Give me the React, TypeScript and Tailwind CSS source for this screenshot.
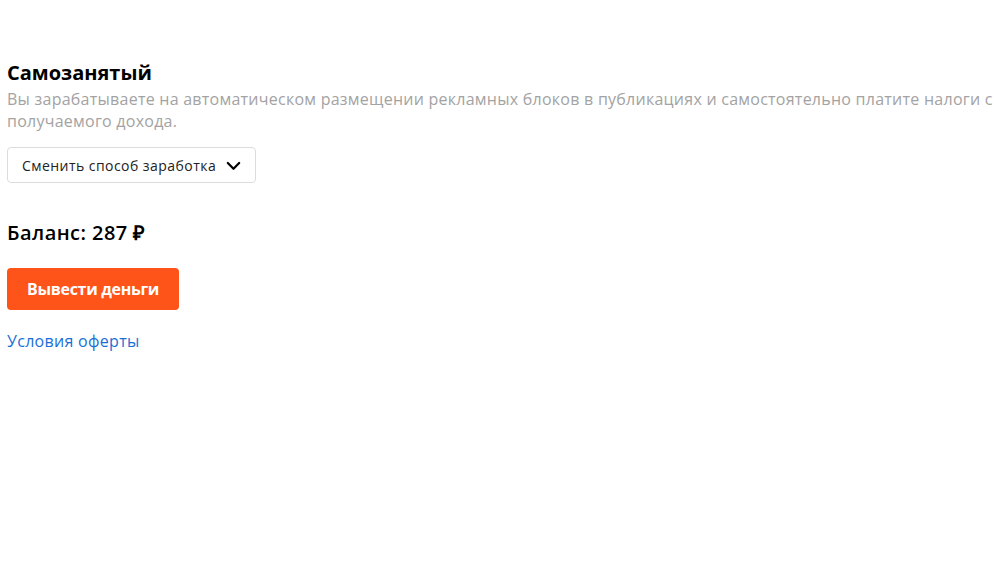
import React from 'react';

const App: React.FC = () => {
  return (
    <div className="min-h-[562px] w-[999px] overflow-hidden bg-white font-['Open_Sans',sans-serif]">
      <div className="pl-[7px] pt-[59px]">
        <h2 className="text-[20px] font-bold leading-[28px] text-black">Самозанятый</h2>
        <p className="mt-px text-[16px] leading-[22px] tracking-[0.25px] text-[#a3a3a3]">
          Вы зарабатываете на автоматическом размещении рекламных блоков в публикациях и самостоятельно платите налоги с
          получаемого дохода.
        </p>
        <button className="mt-[15px] flex h-[36px] items-center gap-[9px] rounded-[4px] border border-[#dcdcdc] bg-white pl-[14px] pr-[13px] text-[14px] tracking-[0.45px] text-[#222]">
          <span>Сменить способ заработка</span>
          <svg width="17" height="17" viewBox="0 0 24 24" fill="none" stroke="currentColor" strokeWidth="3.2" strokeLinecap="round" strokeLinejoin="round" className="text-black">
            <path d="M4 8.5l8 8 8-8" />
          </svg>
        </button>
        <div className="mt-[36px] text-[20px] font-semibold leading-[28px] tracking-[0.45px] text-black">Баланс: 287 ₽</div>
        <button className="mt-[21px] flex h-[42px] items-center rounded-[4px] bg-[#ff5419] px-[20px] text-[16px] font-bold tracking-[-0.3px] text-white">
          Вывести деньги
        </button>
        <a href="#" className="mt-[20px] block w-fit text-[16px] leading-[22px] tracking-[0.3px] text-[#1a6fd6]">
          Условия оферты
        </a>
      </div>
    </div>
  );
};

export default App;
